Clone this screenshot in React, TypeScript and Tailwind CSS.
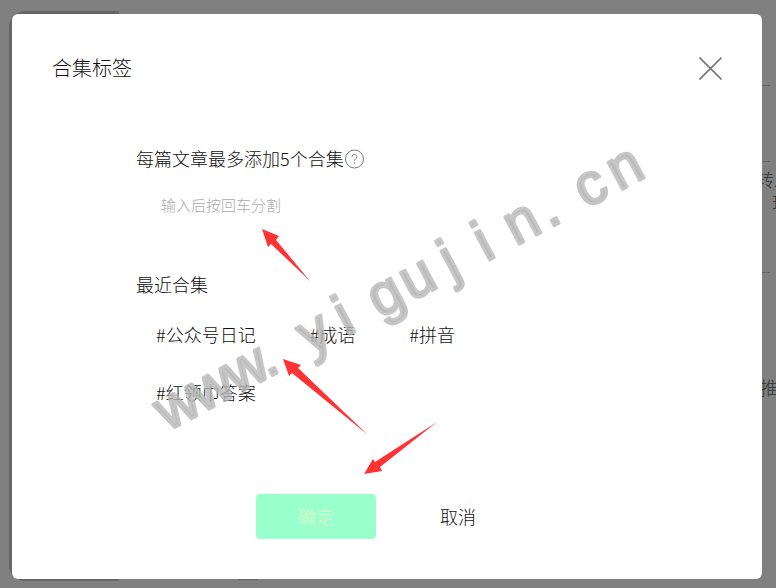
import React from "react";

const recentTags = ["#公众号日记", "#成语", "#拼音", "#红领巾答案"];

const watermark = "www.yigujin.cn";
const glyphX = [20, 59, 98, 121, 175, 209, 256, 292, 328, 367, 410, 440, 488, 527];

const Backdrop = () => {
  return (
    <div className="pointer-events-none absolute inset-0 flex overflow-hidden pl-[9px] text-lg text-[#333]">
      <div className="mt-[11px] mb-[7px] w-[110px] rounded-l-2xl bg-[#666]" />
      <div className="mr-auto mb-2 ml-[119px] w-5 self-end border-b border-[#666]" />
      <div className="w-5 whitespace-nowrap">
        <div className="mr-1.5 h-[86px] border-b border-[#666]" />
        <div className="mr-1.5 h-[76px] border-b border-[#666]" />
        <div className="mr-1.5 h-[111px] border-b border-[#666] pt-1.5 leading-[23px]">
          <p>转发</p>
          <p className="pl-4">珍</p>
        </div>
        <p className="mt-[102px] pl-1 leading-6">推</p>
      </div>
    </div>
  );
};

const Annotations = () => {
  return (
    <svg
      className="pointer-events-none absolute top-0 left-0"
      width="776"
      height="588"
      viewBox="0 0 776 588"
      aria-hidden="true"
    >
      <g transform="translate(168 431) rotate(-28)">
        <text
          x={glyphX.join(" ")}
          y="0"
          textAnchor="middle"
          fontFamily="'Liberation Sans', sans-serif"
          fontSize="58"
          fill="#aaa"
          stroke="#b8b8b8"
          strokeWidth="3"
          strokeLinejoin="round"
          opacity="0.8"
        >
          {watermark}
        </text>
      </g>
      <g fill="#f33">
        <path d="M262 229L279 236L276 240L310 281L271 244L268 247Z" />
        <path d="M283 359L301 365L298 368L368 435L292 373L289 376Z" />
        <path d="M364 474L373 459L375 462L437 422L380 467L382 471Z" />
      </g>
    </svg>
  );
};

const App = () => {
  return (
    <div className="relative min-h-screen bg-[#808080] pt-[14px] pr-[14px] pb-[9px] pl-3 font-['Noto_Sans_CJK_SC',sans-serif] font-light text-[#111]">
      <Backdrop />

      <div
        role="dialog"
        aria-labelledby="dialog-title"
        className="relative rounded-md bg-white px-10 py-10"
      >
        <div className="flex items-center justify-between">
          <h2 id="dialog-title" className="text-xl leading-7">
            合集标签
          </h2>
          <button type="button" aria-label="关闭" className="text-[#777]">
            <svg width="23" height="23" viewBox="0 0 23 23" fill="none" stroke="currentColor" strokeWidth="1.6">
              <path d="M0.5 0.5L22.5 22.5M22.5 0.5L0.5 22.5" />
            </svg>
          </button>
        </div>

        <div className="mt-16 ml-[84px] flex max-w-[460px] flex-col text-lg leading-6">
          <div className="flex items-center">
            <label htmlFor="tag-input">每篇文章最多添加5个合集</label>
            <button type="button" aria-label="帮助" className="pt-0.5 text-[#777]">
              <svg width="20" height="20" viewBox="0 0 20 20" fill="none" stroke="currentColor">
                <circle cx="10.5" cy="10" r="9" />
                <path d="M8 8C8 6.4 9.1 5.5 10.5 5.5S13 6.4 13 7.8C13 9.5 10.5 9.8 10.5 11.8" />
                <path d="M10.5 13.3V14.6" />
              </svg>
            </button>
          </div>

          <input
            id="tag-input"
            type="text"
            placeholder="输入后按回车分割"
            className="mt-3.5 h-10 px-[25px] text-[15px] outline-none placeholder:text-[#aaa]"
          />

          <h3 className="mt-12">最近合集</h3>
          <div className="mt-[26px] flex flex-wrap gap-x-[54px] gap-y-[34px] px-5">
            {recentTags.map((tag) => (
              <button key={tag} type="button">
                {tag}
              </button>
            ))}
          </div>
        </div>

        <div className="mt-[90px] flex justify-center gap-[22px] text-lg">
          <button type="button" className="h-[45px] w-[120px] rounded bg-[#9fc] pb-0.5 font-normal text-[#cfc]">
            确定
          </button>
          <button type="button" className="h-[45px] w-[120px] pb-0.5">
            取消
          </button>
        </div>
      </div>

      <Annotations />
    </div>
  );
};

export default App;
